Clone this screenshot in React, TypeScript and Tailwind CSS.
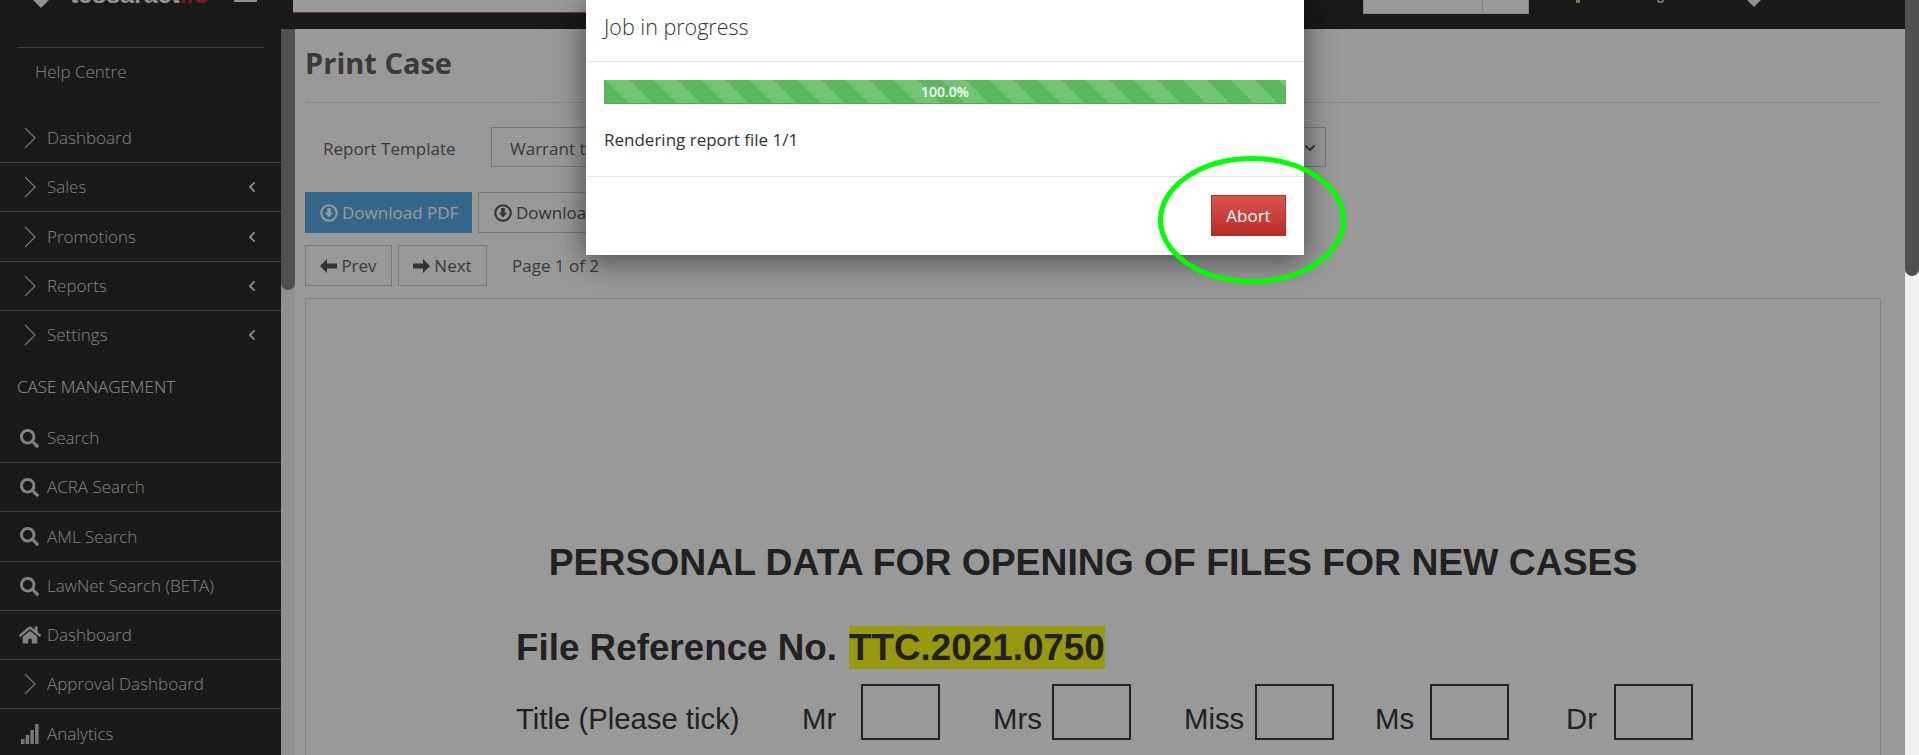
import { FaChevronDown, FaChevronLeft, FaHome, FaSearch } from "react-icons/fa";

const MENU_ONE = [
  { label: "Sales", height: "h-[49px]" },
  { label: "Promotions", height: "h-[50px]" },
  { label: "Reports", height: "h-[49px]" },
];

function ThinChevron() {
  return (
    <svg width="12" height="22" viewBox="0 0 12 22" className="shrink-0">
      <polyline points="1,1 11,11 1,21" fill="none" stroke="#c4c4c4" strokeWidth="1.2" />
    </svg>
  );
}

function Diamond({ className }: { className: string }) {
  return (
    <svg viewBox="0 0 20 20" className={className}>
      <polygon points="10,0 20,10 10,20 0,10" fill="#f0f0f0" />
    </svg>
  );
}

function CircleDown({ color }: { color: string }) {
  return (
    <svg width="18" height="18" viewBox="0 0 17 17" className="shrink-0">
      <circle cx="8.5" cy="8.5" r="7.3" fill="none" stroke={color} strokeWidth="2" />
      <path d="M6.8 3.8h3.4v4.4h2.2l-3.9 4.6-3.9-4.6h2.2z" fill={color} />
    </svg>
  );
}

function FatArrow({ flip }: { flip?: boolean }) {
  return (
    <svg width="17" height="14" viewBox="0 0 17 14" className={flip ? "shrink-0 rotate-180" : "shrink-0"}>
      <path d="M0 7 7 0v4.5h10v5H7V14z" fill="#555555" />
    </svg>
  );
}

function Bars() {
  return (
    <svg width="18" height="20" viewBox="0 0 18 20" className="shrink-0">
      <rect x="0" y="15" width="3.5" height="5" fill="#c8c8c8" />
      <rect x="4.7" y="11" width="3.5" height="9" fill="#c8c8c8" />
      <rect x="9.4" y="6" width="3.5" height="14" fill="#c8c8c8" />
      <rect x="14.1" y="0" width="3.5" height="20" fill="#c8c8c8" />
    </svg>
  );
}

function SideRow({
  icon,
  label,
  arrow,
  height = "h-[49px]",
  last,
}: {
  icon: React.ReactNode;
  label: string;
  arrow?: boolean;
  height?: string;
  last?: boolean;
}) {
  return (
    <div className={`flex items-center ${height} ${last ? "" : "border-b border-[#676c78]"}`}>
      <span className="flex w-[47px] shrink-0 justify-center pl-[17px] pr-[5px]">{icon}</span>
      <span className="text-[17px] font-light text-[#dcdcdc]">{label}</span>
      {arrow && <FaChevronLeft className="ml-auto mr-[23px] text-[12px] text-[#e4e4e4]" />}
    </div>
  );
}

function TitleBox({ label, labelWidth, gap }: { label: string; labelWidth: string; gap: string }) {
  return (
    <div className={`flex items-center ${gap}`}>
      <span className={`${labelWidth} pt-[14px]`}>{label}</span>
      <span className="h-[56px] w-[79px] border-2 border-[#3a3a3a]" />
    </div>
  );
}

export default function App() {
  return (
    <div className="flex h-[755px] w-full overflow-hidden bg-white font-['Open_Sans',sans-serif]">
      <div className="relative flex min-w-0 flex-1 flex-col overflow-hidden">
        {/* top bar, page is scrolled so most of it is cut off */}
        <header className="flex h-[29px] shrink-0 items-start overflow-hidden bg-[#2a2a2a]">
          <Diamond className="ml-[31px] -mt-[12px] h-[20px] w-[20px] shrink-0" />
          <span className="ml-[19px] -mt-[21px] w-[137px] shrink-0 whitespace-nowrap font-['Liberation_Sans',sans-serif] text-[25px] font-bold leading-[30px] text-[#f0f0f0]">
            tessaract<span className="text-[#c62f36]">.io</span>
          </span>
          <span className="ml-[27px] h-[2px] w-[23px] shrink-0 bg-[#f0f0f0]" />
          <div className="ml-[36px] h-[13px] w-[800px] shrink-0 border-b border-[#d9534f] bg-white" />
          <div className="ml-[270px] flex h-[14px] w-[166px] shrink-0 border border-t-0 border-[#dddddd] bg-white">
            <span className="w-[119px] border-r border-[#dddddd]" />
          </div>
          <span className="ml-[47px] h-[3px] w-[4px] shrink-0 bg-[#e8c070]" />
          <span className="ml-[77px] h-[3px] w-[7px] shrink-0 rounded-b-full border-2 border-t-0 border-[#b9c4e0]" />
          <Diamond className="ml-[81px] -mt-[11px] h-[18px] w-[18px] shrink-0" />
        </header>

        <div className="flex min-h-0 flex-1">
          <aside className="w-[281px] shrink-0 bg-[#2a2a2a]">
            <div className="mx-[17px] mt-[18px] h-[67px] border-t border-[#676c78] pl-[18px] pt-[11px] text-[17px] font-light text-[#dcdcdc]">
              Help Centre
            </div>
            <SideRow icon={<ThinChevron />} label="Dashboard" />
            {MENU_ONE.map((item) => (
              <SideRow key={item.label} icon={<ThinChevron />} label={item.label} height={item.height} arrow />
            ))}
            <SideRow icon={<ThinChevron />} label="Settings" height="h-[48px]" arrow last />
            <div className="flex h-[55px] items-center pl-[17px] text-[17px] font-light text-[#f0f0f0]">CASE MANAGEMENT</div>
            <SideRow icon={<FaSearch className="text-[19px] text-[#d8d8d8]" />} label="Search" />
            <SideRow icon={<FaSearch className="text-[19px] text-[#d8d8d8]" />} label="ACRA Search" />
            <SideRow icon={<FaSearch className="text-[19px] text-[#d8d8d8]" />} label="AML Search" height="h-[50px]" />
            <SideRow icon={<FaSearch className="text-[19px] text-[#d8d8d8]" />} label="LawNet Search (BETA)" />
            <SideRow icon={<FaHome className="text-[22px] text-[#d8d8d8]" />} label="Dashboard" />
            <SideRow icon={<ThinChevron />} label="Approval Dashboard" />
            <SideRow icon={<Bars />} label="Analytics" last />
          </aside>

          <div className="w-[14px] shrink-0 bg-[#f1f1f1]">
            <div className="h-[261px] rounded-b-[7px] bg-[#848484]" />
          </div>

          <main className="min-w-0 flex-1 pl-[10px] pr-[24px] text-[#5f5f5f]">
            <div className="h-[74px] border-b border-[#e8e8e8] pt-[12px] text-[29px] font-bold leading-[44px] text-[#616161]">
              Print Case
            </div>

            <div className="mt-[24px] flex h-[40px] items-center text-[17px]">
              <span className="w-[186px] shrink-0 pl-[18px] pt-[4px]">Report Template</span>
              <div className="flex h-[40px] w-[835px] items-center border border-[#cccccc] pl-[18px] pr-[9px]">
                <span className="pt-[4px]">Warrant to Act</span>
                <FaChevronDown className="ml-auto mt-[1px] text-[12px] text-[#555555]" />
              </div>
            </div>

            <div className="mt-[25px] flex gap-[6px] text-[17px]">
              <button className="flex h-[41px] w-[167px] items-center gap-[4px] bg-[#55aae5] pl-[15px] text-white">
                <CircleDown color="#ffffff" />
                Download PDF
              </button>
              <button className="flex h-[41px] w-[190px] items-center gap-[4px] border border-[#cccccc] pl-[15px] text-[#555555]">
                <CircleDown color="#555555" />
                Download
              </button>
            </div>

            <div className="mt-[12px] flex items-center text-[17px]">
              <button className="flex h-[41px] w-[87px] items-center justify-center gap-[4px] border border-[#cccccc]">
                <FatArrow />
                Prev
              </button>
              <button className="ml-[6px] flex h-[41px] w-[89px] items-center justify-center gap-[4px] border border-[#cccccc]">
                <FatArrow flip />
                Next
              </button>
              <span className="ml-[25px]">Page 1 of 2</span>
            </div>

            <div className="mt-[12px] h-[500px] border border-[#dddddd] pt-[241px] font-['Liberation_Sans',sans-serif] text-[#383838]">
              <div className="text-center text-[37.3px] font-bold leading-[44px]">PERSONAL DATA FOR OPENING OF FILES FOR NEW CASES</div>
              <div className="ml-[210px] mt-[42px] flex h-[43px] items-center text-[36.8px] font-bold">
                File Reference No.
                <span className="ml-[12px] flex h-[43px] items-center bg-[#ffff1c]">TTC.2021.0750</span>
              </div>
              <div className="ml-[210px] mt-[14px] flex items-center text-[29.3px]">
                <span className="w-[286px] pt-[14px]">Title (Please tick)</span>
                <TitleBox label="Mr" labelWidth="w-[59px]" gap="" />
                <TitleBox label="Mrs" labelWidth="w-[59px]" gap="ml-[53px]" />
                <TitleBox label="Miss" labelWidth="w-[71px]" gap="ml-[53px]" />
                <TitleBox label="Ms" labelWidth="w-[55px]" gap="ml-[41px]" />
                <TitleBox label="Dr" labelWidth="w-[48px]" gap="ml-[57px]" />
              </div>
            </div>
          </main>
        </div>

        {/* dimmed backdrop and the progress dialog */}
        <div className="absolute inset-0 bg-black/40" />
        <div className="absolute left-[586px] top-0 flex h-[255px] w-[718px] flex-col bg-white shadow-[0_5px_30px_rgba(0,0,0,0.55)]">
          <div className="flex h-[62px] items-center border-b border-[#e5e5e5] px-[18px] pb-[6px] text-[21.5px] font-light text-[#333333]">
            Job in progress
          </div>
          <div className="h-[115px] border-b border-[#e5e5e5] px-[18px] pt-[18px]">
            <div className="flex h-[24px] items-center justify-center border-b border-[#4cae4c] bg-[repeating-linear-gradient(45deg,#5cb85c_0,#5cb85c_17px,#74c476_17px,#74c476_34px)] text-[14px] font-semibold text-white">
              100.0%
            </div>
            <p className="mt-[23px] text-[17px] text-[#333333]">Rendering report file 1/1</p>
          </div>
          <div className="flex justify-end px-[18px] pt-[18px]">
            <button className="h-[41px] w-[75px] border border-[#b92c28] bg-gradient-to-b from-[#d9534f] to-[#b92c28] text-[17px] text-white">
              Abort
            </button>
          </div>
        </div>
        <svg width="192" height="132" viewBox="0 0 192 132" className="absolute left-[1156px] top-[154px]">
          <ellipse cx="96" cy="66" rx="91.5" ry="61.5" fill="none" stroke="#00ff00" strokeWidth="5" />
        </svg>
      </div>

      <div className="w-[14px] shrink-0 bg-[#f1f1f1]">
        <div className="h-[276px] rounded-b-[7px] bg-[#505050]" />
      </div>
    </div>
  );
}
